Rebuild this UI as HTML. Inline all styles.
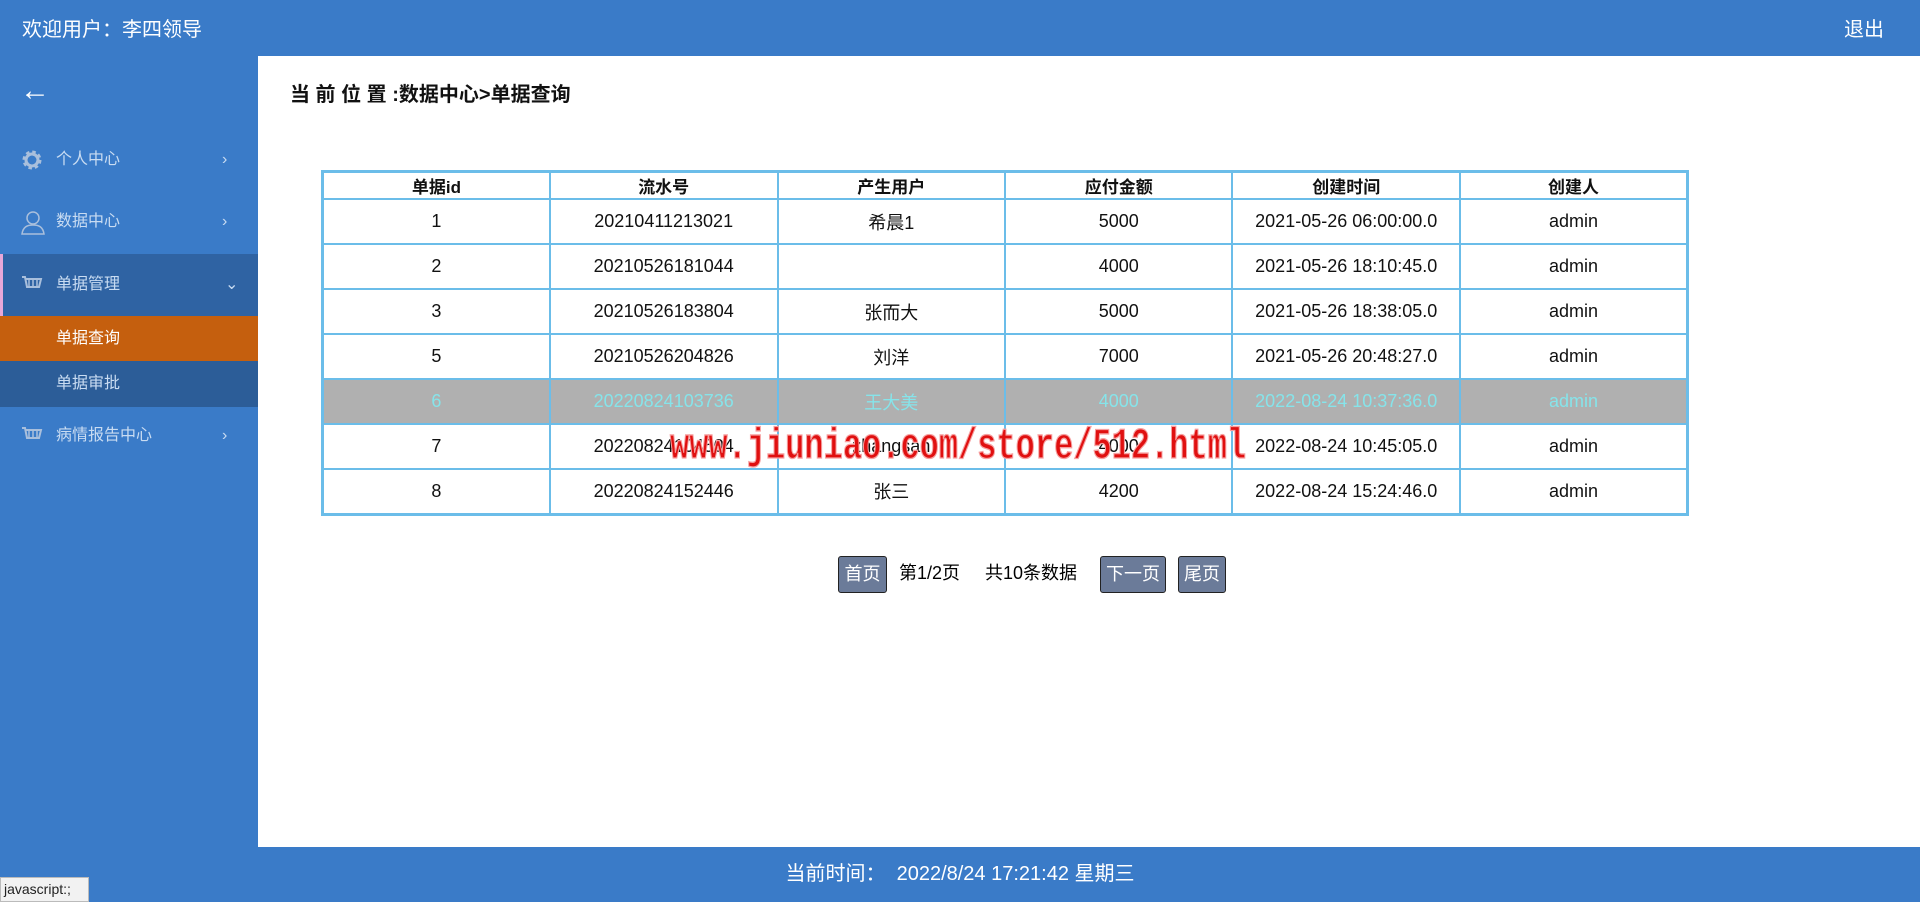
<!DOCTYPE html>
<html><head><meta charset="utf-8"><style>
*{margin:0;padding:0;box-sizing:border-box}
body{width:1920px;height:902px;overflow:hidden;background:#3a7bc8;font-family:"Liberation Sans","Noto Sans CJK SC",sans-serif;position:relative}
.top{position:absolute;left:0;top:0;width:1920px;height:56px;background:#3a7bc8;color:#fff;font-size:20px}
.top .w{position:absolute;left:22px;top:13px}
.top .q{position:absolute;right:36px;top:13px}
.side{position:absolute;left:0;top:56px;width:258px;height:791px;background:#3a7bc8;color:#c9dcf2;font-size:16px}
.arrow{position:absolute;left:20px;top:18px;color:#fff;font-size:30px;font-weight:bold}
.mi{position:absolute;left:0;width:258px;height:62px;line-height:62px}
.mi .t{position:absolute;left:56px}
.mi .c{position:absolute;left:222px;font-size:16px}
.mi svg{position:absolute;left:20px;top:19px}
.main{position:absolute;left:258px;top:56px;width:1662px;height:791px;background:#fff}
.title{position:absolute;left:32px;top:22px;font-size:20px;font-weight:bold;color:#111}
table{position:absolute;left:63px;top:114px;width:1368px;border-collapse:collapse;border:3px solid #6bbde9;font-size:18px;color:#111;text-align:center}
td,th{border:2px solid #6bbde9;width:228px}
th{height:26px;font-size:17px;font-weight:bold}
td{height:45px}
tr.hl td{background:#b0b0b0;color:#86e4ea}
.wm{position:absolute;left:412px;top:372px;font-family:"Liberation Mono",monospace;font-weight:bold;font-size:32px;color:#e01010;-webkit-text-stroke:1px #f6a0a0;white-space:nowrap;transform:scaleY(1.35);transform-origin:left center}
.pg{position:absolute;top:500px;height:37px;line-height:35px;font-size:18px}
.btn{background:#6b7b99;color:#fff;border:1px solid #222;border-radius:3px;text-align:center}
.foot{position:absolute;left:0;top:847px;width:1920px;height:55px;background:#3a7bc8;color:#fff;font-size:20px;text-align:center;line-height:55px}
.js{position:absolute;left:0;top:877px;width:89px;height:25px;background:#f2f2f2;border:1px solid #bbb;font-size:14px;color:#222;line-height:23px;padding-left:3px}
</style></head><body>
<div class="top"><span class="w">欢迎用户：李四领导</span><span class="q">退出</span></div>
<div class="side">
<div class="arrow">←</div>
<div class="mi" style="top:73px"><svg width="24" height="24" viewBox="0 0 24 24"><circle cx="12" cy="12" r="7" fill="none" stroke="#a9bfdc" stroke-width="5" stroke-dasharray="3 2.5"/><circle cx="12" cy="12" r="6" fill="none" stroke="#a9bfdc" stroke-width="3"/></svg><span class="t">个人中心</span><span class="c">›</span></div>
<div class="mi" style="top:135px"><svg width="26" height="26" viewBox="0 0 26 26"><circle cx="13" cy="8" r="6" fill="none" stroke="#a9bfdc" stroke-width="1.5"/><path d="M2 24c1-7 5-9 11-9s10 2 11 9z" fill="none" stroke="#a9bfdc" stroke-width="1.5"/></svg><span class="t">数据中心</span><span class="c">›</span></div>
<div class="mi" style="top:198px;background:#2f63a3;border-left:3px solid #e7a7d8"><svg width="24" height="24" viewBox="0 0 24 24" style="left:17px"><path d="M2 4h3l2 10h12l2-8H6" fill="none" stroke="#a9bfdc" stroke-width="2"/><path d="M9 7v6M13 7v6M17 7v6" stroke="#a9bfdc" stroke-width="1.5"/></svg><span class="t" style="left:53px">单据管理</span><span class="c" style="left:222px">⌄</span></div>
<div class="mi" style="top:260px;height:45px;line-height:45px;background:#c55f0e;color:#fff"><span class="t">单据查询</span></div>
<div class="mi" style="top:305px;height:46px;line-height:46px;background:#2c5d98"><span class="t">单据审批</span></div>
<div class="mi" style="top:349px"><svg width="24" height="24" viewBox="0 0 24 24"><path d="M2 4h3l2 10h12l2-8H6" fill="none" stroke="#a9bfdc" stroke-width="2"/><path d="M9 7v6M13 7v6M17 7v6" stroke="#a9bfdc" stroke-width="1.5"/></svg><span class="t">病情报告中心</span><span class="c">›</span></div>
</div>
<div class="main">
<div class="title">当 前 位 置 :数据中心&gt;单据查询</div>
<table>
<tr><th>单据id</th><th>流水号</th><th>产生用户</th><th>应付金额</th><th>创建时间</th><th>创建人</th></tr>
<tr><td>1</td><td>20210411213021</td><td>希晨1</td><td>5000</td><td>2021-05-26 06:00:00.0</td><td>admin</td></tr>
<tr><td>2</td><td>20210526181044</td><td></td><td>4000</td><td>2021-05-26 18:10:45.0</td><td>admin</td></tr>
<tr><td>3</td><td>20210526183804</td><td>张而大</td><td>5000</td><td>2021-05-26 18:38:05.0</td><td>admin</td></tr>
<tr><td>5</td><td>20210526204826</td><td>刘洋</td><td>7000</td><td>2021-05-26 20:48:27.0</td><td>admin</td></tr>
<tr class="hl"><td>6</td><td>20220824103736</td><td>王大美</td><td>4000</td><td>2022-08-24 10:37:36.0</td><td>admin</td></tr>
<tr><td>7</td><td>20220824104504</td><td>zhangsan</td><td>4000</td><td>2022-08-24 10:45:05.0</td><td>admin</td></tr>
<tr><td>8</td><td>20220824152446</td><td>张三</td><td>4200</td><td>2022-08-24 15:24:46.0</td><td>admin</td></tr>
</table>
<div class="wm">www.jiuniao.com/store/512.html</div>
<div class="pg btn" style="left:580px;width:49px">首页</div>
<div class="pg" style="left:641px">第1/2页</div>
<div class="pg" style="left:727px">共10条数据</div>
<div class="pg btn" style="left:842px;width:66px">下一页</div>
<div class="pg btn" style="left:920px;width:48px">尾页</div>
</div>
<div class="foot">当前时间：&nbsp; 2022/8/24 17:21:42 星期三</div>
<div class="js">javascript:;</div>
</body></html>
